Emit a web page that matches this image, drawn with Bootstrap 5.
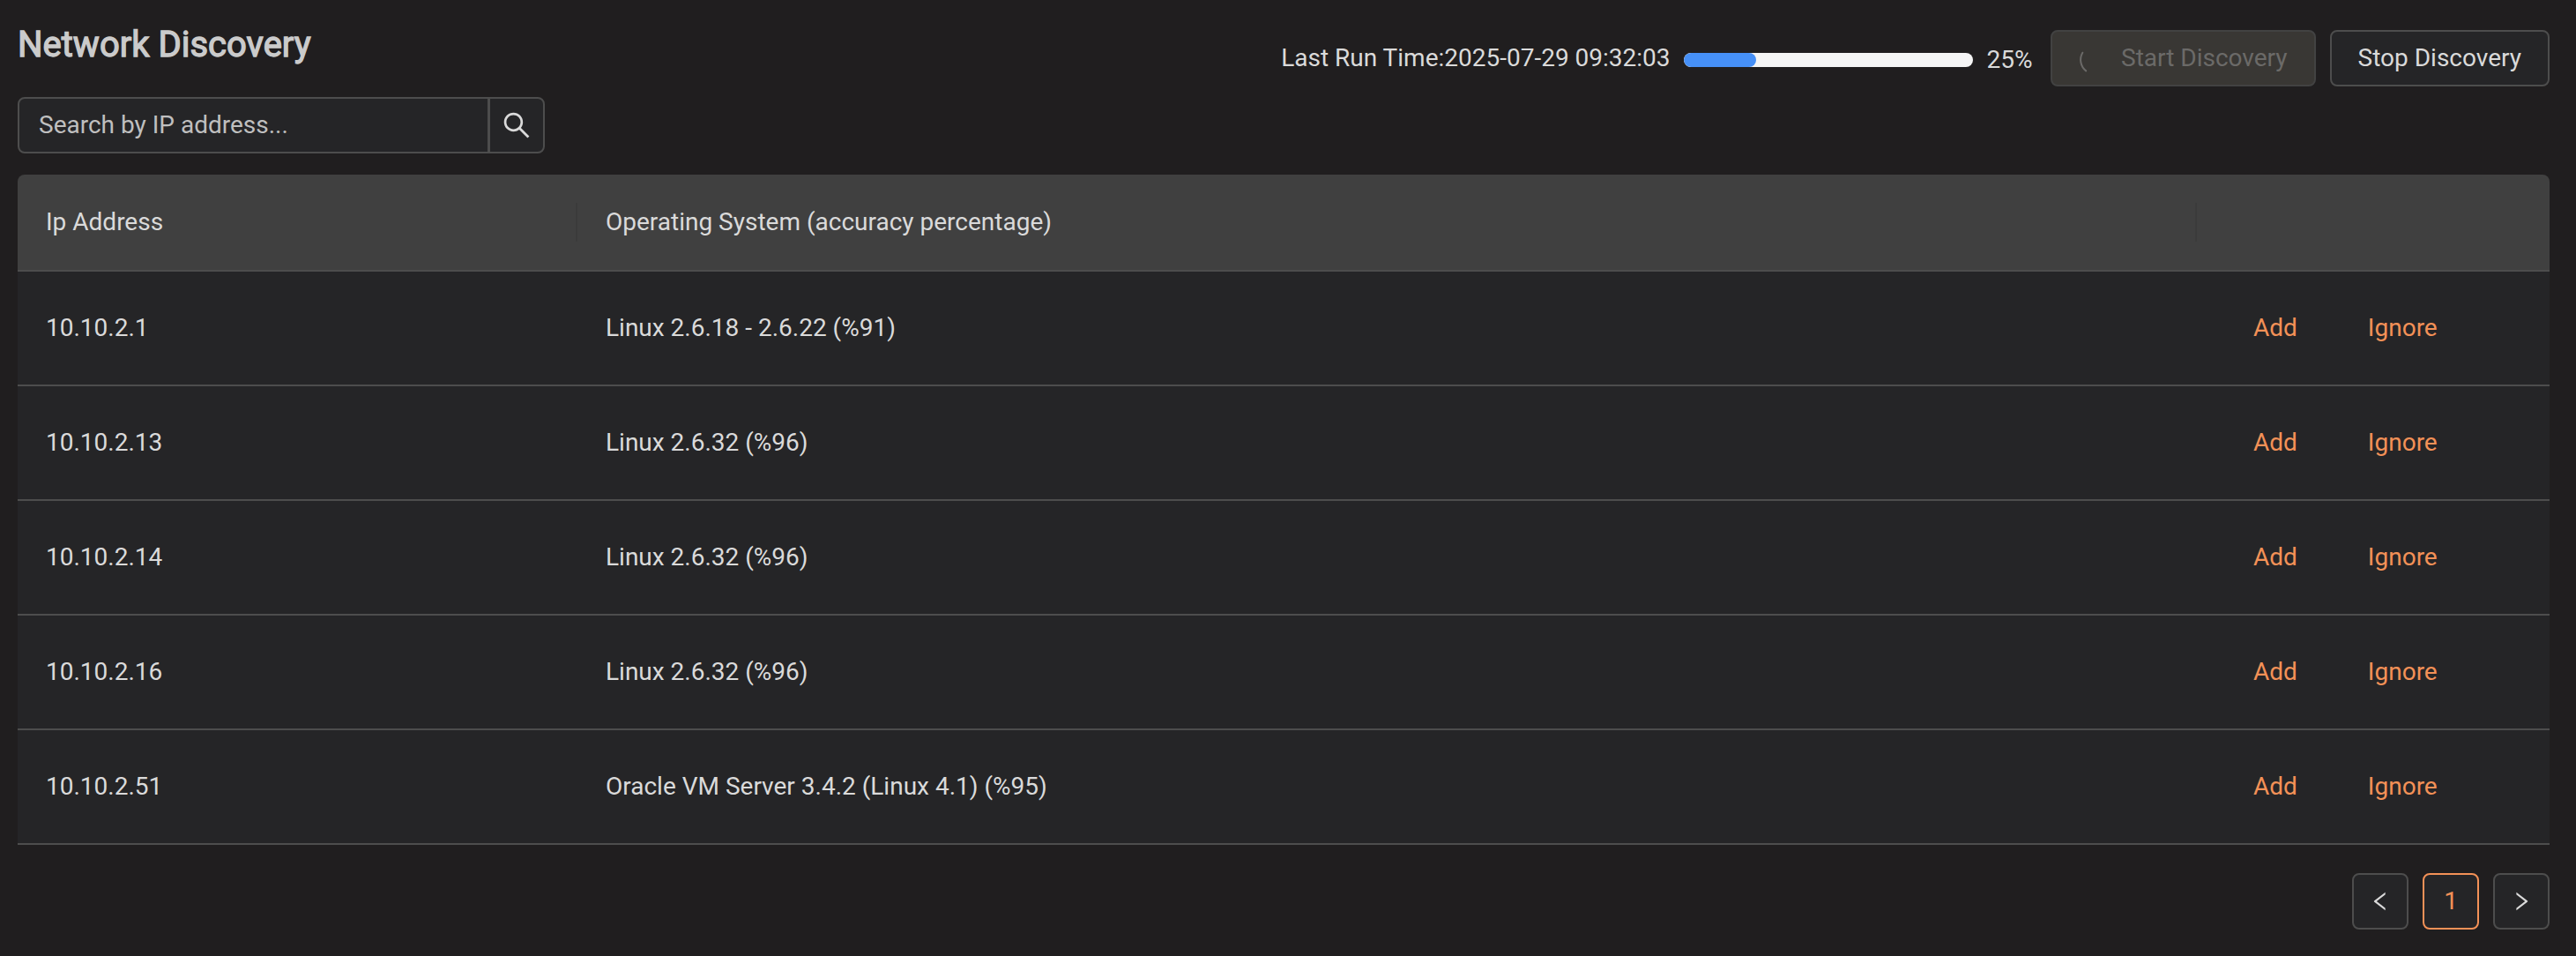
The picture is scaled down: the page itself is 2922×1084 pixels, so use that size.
<!DOCTYPE html>
<html lang="en">
<head>
  <meta charset="UTF-8">
  <title>Network Discovery</title>
  <meta name="viewport" content="width=device-width, initial-scale=1">
  <link href="https://cdn.jsdelivr.net/npm/bootstrap@5.3.0/dist/css/bootstrap.min.css" rel="stylesheet">
  <style>
    body {
      background: #201e1f;
      color: #dadada;
      font-family: Roboto, "Liberation Sans", sans-serif;
      font-size: 28px;
      line-height: 44px;
      padding: 20px 30px 0 20px;
    }
    .page-title {
      padding-top: 1px;
      font-size: 40px;
      line-height: 60px;
      font-weight: 400;
      color: #cbcbcb;
      -webkit-text-stroke: 1.3px #cbcbcb;
    }
    .toolbar {
      height: 90px;
    }
    .run-controls {
      padding-top: 14px;
    }
    .run-time {
      padding-top: 10px;
      margin-right: 15px;
    }
    .run-progress {
      width: 328px;
      height: 16px;
      margin: 26px 16px 0 0;
      border-radius: 8px;
      background: #f5f5f5;
    }
    .run-progress .progress-bar {
      border-radius: 8px;
      background: #4690f7;
    }
    .run-percent {
      width: 72px;
      padding-top: 12px;
    }
    .btn-dark-line {
      height: 64px;
      padding: 0 30px;
      border: 2px solid #4d4d4d;
      border-radius: 8px;
      background: #252527;
      color: #dadada;
      font-size: 28px;
      line-height: 58px;
    }
    .btn-dark-line:disabled {
      width: 301px;
      opacity: 1;
      border-color: #424242;
      background: #393734;
      color: #6b6a68;
    }
    .search-box {
      width: 598px;
      height: 64px;
    }
    .search-box .form-control {
      padding: 0 22px;
      border: 2px solid #4d4d4d;
      border-radius: 8px 0 0 8px;
      background: #252527;
      color: #dadada;
      font-size: 28px;
      line-height: 44px;
    }
    .search-box .form-control::placeholder {
      color: #bfbfbf;
      opacity: 1;
    }
    .search-box .btn {
      width: 64px;
      padding: 0;
      border: 2px solid #4d4d4d;
      border-radius: 0 8px 8px 0;
      background: #252527;
      color: #dadada;
    }
    .host-table {
      table-layout: fixed;
      margin: 24px 0 32px;
      border-collapse: separate;
      border-spacing: 0;
      --bs-table-bg: transparent;
      --bs-table-color: #dadada;
    }
    .host-table th,
    .host-table td {
      padding: 0 32px;
      border-bottom: 2px solid #4d4d4d;
      font-weight: 400;
      vertical-align: middle;
    }
    .host-table th {
      height: 110px;
      background: #404040;
    }
    .host-table td {
      height: 130px;
      background: #252527;
    }
    .host-table th:first-child {
      border-top-left-radius: 8px;
    }
    .host-table th:last-child {
      border-top-right-radius: 8px;
    }
    .host-table th .head-cell {
      margin-right: -32px;
      border-right: 2px solid #3b3b3b;
    }
    .host-table td a {
      color: #f39157;
      text-decoration: none;
    }
    .host-table td a:first-child {
      margin-left: 32px;
      margin-right: 80px;
    }
    .pager {
      gap: 16px;
    }
    .pager .page-item .page-link {
      width: 64px;
      height: 64px;
      margin: 0;
      padding: 0;
      border: 2px solid #4d4d4d;
      border-radius: 8px;
      background: #252527;
      color: #dadada;
      font-size: 28px;
      line-height: 60px;
    }
    .pager .page-item.active .page-link {
      border-color: #f39157;
      color: #f39157;
    }
  </style>
</head>
<body>

<div class="toolbar d-flex justify-content-between align-items-start">
  <h1 class="page-title m-0">Network Discovery</h1>
  <div class="run-controls d-flex align-items-start">
    <div class="run-time">Last Run Time:2025-07-29 09:32:03</div>
    <div class="progress run-progress">
      <div class="progress-bar" id="runBar"></div>
    </div>
    <div class="run-percent" id="runPercent"></div>
    <button class="btn btn-dark-line d-flex align-items-center me-3" disabled>
      <svg width="28" height="34" viewBox="0 0 28 34" fill="none" stroke="currentColor" stroke-width="2" stroke-linecap="round">
        <path d="M4.3 10.7A16 16 0 0 0 8.2 31.4"/>
      </svg>
      <span class="ms-auto">Start Discovery</span>
    </button>
    <button class="btn btn-dark-line">Stop Discovery</button>
  </div>
</div>

<div class="input-group search-box">
  <input type="text" class="form-control" placeholder="Search by IP address...">
  <button class="btn d-flex align-items-center justify-content-center" aria-label="Search">
    <svg width="32" height="32" viewBox="64 64 896 896" fill="currentColor">
      <path d="M909.6 854.5L649.9 594.8C690.2 542.7 712 479 712 412c0-80.2-31.3-155.4-87.9-212.1-56.6-56.7-132-87.9-212.1-87.9s-155.5 31.3-212.1 87.9C143.2 256.5 112 331.8 112 412c0 80.1 31.3 155.5 87.9 212.1C256.5 680.8 331.8 712 412 712c67 0 130.6-21.8 182.7-62l259.7 259.6a8.2 8.2 0 0011.6 0l43.6-43.5a8.2 8.2 0 000-11.6zM570.4 570.4C528 612.7 471.8 636 412 636s-116-23.3-158.4-65.6C211.3 528 188 471.8 188 412s23.3-116.1 65.6-158.4C296 211.3 352.2 188 412 188s116.1 23.2 158.4 65.6S636 352.2 636 412s-23.3 116.1-65.6 158.4z"/>
    </svg>
  </button>
</div>

<table class="table host-table">
  <colgroup>
    <col width="635">
    <col>
    <col width="400">
  </colgroup>
  <thead>
    <tr>
      <th><div class="head-cell">Ip Address</div></th>
      <th><div class="head-cell">Operating System (accuracy percentage)</div></th>
      <th></th>
    </tr>
  </thead>
  <tbody id="hostRows"></tbody>
</table>

<ul class="pagination pager justify-content-end m-0">
  <li class="page-item">
    <a class="page-link d-flex align-items-center justify-content-center" href="#" aria-label="Previous">
      <svg width="24" height="24" viewBox="64 64 896 896" fill="currentColor">
        <path d="M724 218.3V141c0-6.7-7.7-10.4-12.9-6.3L260.3 486.8a31.86 31.86 0 000 50.3l450.8 352.1c5.3 4.1 12.9.4 12.9-6.3v-77.3c0-4.9-2.3-9.6-6.1-12.6l-360-281 360-281.1c3.8-3 6.1-7.7 6.1-12.6z"/>
      </svg>
    </a>
  </li>
  <li class="page-item active"><a class="page-link text-center" href="#">1</a></li>
  <li class="page-item">
    <a class="page-link d-flex align-items-center justify-content-center" href="#" aria-label="Next">
      <svg width="24" height="24" viewBox="64 64 896 896" fill="currentColor">
        <path d="M765.7 486.8L314.9 134.7A7.97 7.97 0 00302 141v77.3c0 4.9 2.3 9.6 6.1 12.6l360 281.1-360 281.1c-3.9 3-6.1 7.7-6.1 12.6V883c0 6.7 7.7 10.4 12.9 6.3l450.8-352.1a31.96 31.96 0 000-50.4z"/>
      </svg>
    </a>
  </li>
</ul>

<script src="https://cdn.jsdelivr.net/npm/bootstrap@5.3.0/dist/js/bootstrap.bundle.min.js"></script>
<script>
  const progress = 25;
  const hosts = [
    { ip: "10.10.2.1", os: "Linux 2.6.18 - 2.6.22 (%91)" },
    { ip: "10.10.2.13", os: "Linux 2.6.32 (%96)" },
    { ip: "10.10.2.14", os: "Linux 2.6.32 (%96)" },
    { ip: "10.10.2.16", os: "Linux 2.6.32 (%96)" },
    { ip: "10.10.2.51", os: "Oracle VM Server 3.4.2 (Linux 4.1) (%95)" }
  ];

  document.getElementById("runBar").style.width = progress + "%";
  document.getElementById("runPercent").textContent = progress + "%";

  document.getElementById("hostRows").innerHTML = hosts.map(host => `
    <tr>
      <td>${host.ip}</td>
      <td>${host.os}</td>
      <td><a href="#">Add</a><a href="#">Ignore</a></td>
    </tr>
  `).join("");
</script>

</body>
</html>
